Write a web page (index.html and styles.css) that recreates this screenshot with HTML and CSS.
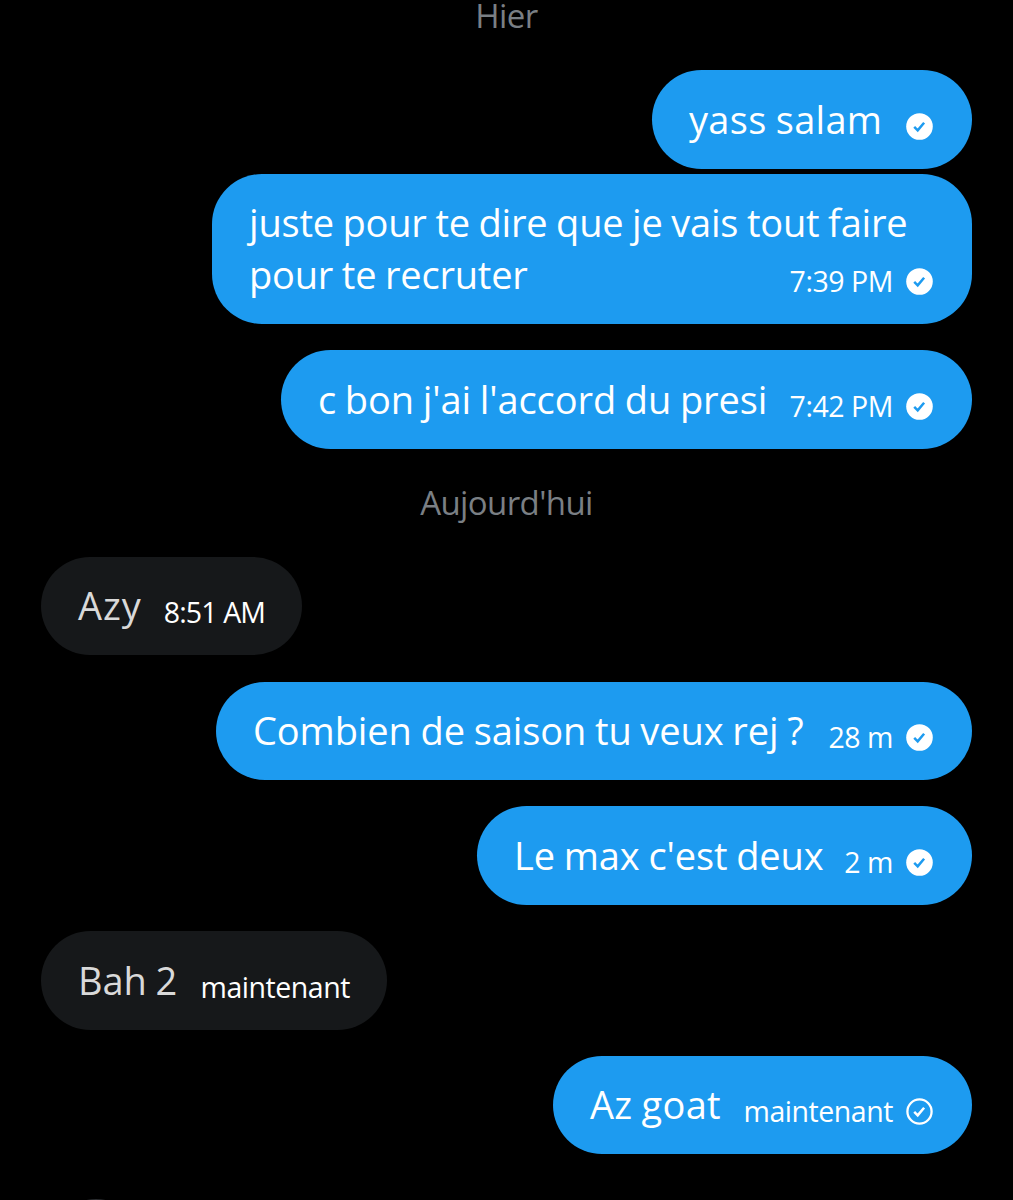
FILE: index.html
```html
<!DOCTYPE html>
<html lang="fr">
<head>
    <meta charset="UTF-8">
    <meta name="viewport" content="width=device-width, initial-scale=1.0">
    <title>Messages</title>
    <link rel="stylesheet" href="styles.css">
</head>
<body>
    <!-- icons shared by every sent message -->
    <svg class="icons">
        <symbol id="sent" viewBox="0 0 27 27">
            <circle cx="13.5" cy="13.5" r="13.3" fill="#fff"/>
            <path d="M8.2 13.9l3.5 3.4 6.4-7.6" fill="none" stroke="#1d9bf0" stroke-width="2.5"/>
        </symbol>
        <symbol id="sending" viewBox="0 0 27 27">
            <circle cx="13.5" cy="13.5" r="12.1" fill="none" stroke="#fff" stroke-width="2.3"/>
            <path d="M8.2 13.9l3.5 3.4 6.4-7.6" fill="none" stroke="#fff" stroke-width="2.5"/>
        </symbol>
    </svg>
    <main class="chat">
        <h2 class="day">Hier</h2>
        <div class="bubble me m1 close">
            <p class="text">yass salam</p>
            <svg class="check"><use href="#sent"/></svg>
        </div>
        <div class="bubble me m2">
            <p class="text">juste pour te dire que je vais tout faire<br>pour te recruter</p>
            <div class="meta"><span class="time">7:39 PM</span><svg class="check"><use href="#sent"/></svg></div>
        </div>
        <div class="bubble me m3">
            <p class="text">c bon j'ai l'accord du presi</p>
            <div class="meta"><span class="time">7:42 PM</span><svg class="check"><use href="#sent"/></svg></div>
        </div>
        <h2 class="day today">Aujourd'hui</h2>
        <div class="bubble other m4">
            <p class="text">Azy</p>
            <div class="meta"><span class="time">8:51 AM</span></div>
        </div>
        <div class="bubble me m5">
            <p class="text">Combien de saison tu veux rej ?</p>
            <div class="meta"><span class="time">28 m</span><svg class="check"><use href="#sent"/></svg></div>
        </div>
        <div class="bubble me m6">
            <p class="text">Le max c'est deux</p>
            <div class="meta"><span class="time">2 m</span><svg class="check"><use href="#sent"/></svg></div>
        </div>
        <div class="bubble other m7">
            <p class="text">Bah 2</p>
            <div class="meta"><span class="time">maintenant</span></div>
        </div>
        <div class="bubble me m8">
            <p class="text">Az goat</p>
            <div class="meta"><span class="time">maintenant</span><svg class="check"><use href="#sending"/></svg></div>
        </div>
        <div class="avatar"></div>
    </main>
</body>
</html>
```

FILE: styles.css
```css
*{
    box-sizing: border-box;
}
body{
    margin: 0;
    background-color: #000;
    color: white;
    font-family: "Open Sans", "Noto Sans", sans-serif;
}
.icons{
    display: none;
}
.chat{
    display: flex;
    flex-direction: column;
    height: 1200px;
    padding: 0 41px;
    overflow: hidden;
}
.day{
    flex: none;
    height: 70px;
    margin: 0;
    color: #7a7f84;
    font-size: 33px;
    font-weight: 400;
    letter-spacing: -0.6px;
    line-height: 32px;
    text-align: center;
}
.today{
    height: 82px;
    padding-top: 12px;
}
.bubble{
    flex: none;
    display: flex;
    justify-content: space-between;
    align-items: flex-end;
    height: 98.5px;
    margin-bottom: 26.2px;
    padding: 22px 39px 24px 37px;
    border-radius: 50px;
    white-space: nowrap;
}
.me{
    align-self: flex-end;
    background-color: #1d9bf0;
}
.other{
    align-self: flex-start;
    background-color: #16181a;
    padding-right: 37px;
}
.other .text{
    color: #d9d9d9;
}
.close{
    margin-bottom: 5.8px;
}
.text{
    margin: 0;
    font-size: 38px;
    line-height: 52px;
    letter-spacing: -0.1px;
    word-spacing: -1px;
}
.meta{
    display: flex;
    align-items: flex-end;
    gap: 13px;
}
.time{
    font-size: 28.5px;
    line-height: 38px;
    letter-spacing: -0.45px;
}
.check{
    flex: none;
    width: 27px;
    height: 27px;
    margin-bottom: 5px;
}
.m1{
    width: 320px;
}
.m1 .text{
    letter-spacing: 0.3px;
}
.m2{
    width: 760px;
    height: 149.8px;
}
/* the time sits beside the second line, under the end of the first */
.m2 .text{
    width: 0;
    letter-spacing: -0.2px;
}
.m3{
    width: 691px;
}
.m4{
    width: 261px;
}
.m4 .text{
    letter-spacing: 1px;
}
.m4 .time{
    letter-spacing: -0.9px;
}
.m5{
    width: 756px;
}
.m6{
    width: 495px;
}
.m7{
    width: 346px;
}
.m8{
    width: 419px;
}
.m8 .text{
    letter-spacing: 0.3px;
}
.avatar{
    flex: none;
    width: 90px;
    height: 90px;
    margin: 18.8px 0 0 10px;
    border-radius: 50%;
    background-color: #2a2c2f;
}
```
